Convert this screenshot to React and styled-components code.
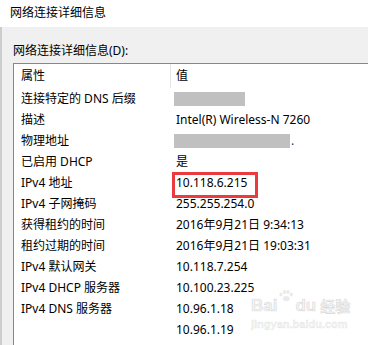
import React from "react";
import styled, { createGlobalStyle } from "styled-components";

const GlobalStyle = createGlobalStyle`
  html, body {
    margin: 0;
    padding: 0;
    background: #f0f0f0;
  }
  body {
    width: 368px;
    height: 345px;
    overflow: hidden;
    font-family: "Noto Sans", "Noto Sans CJK SC", sans-serif;
    font-size: 12px;
    color: #000;
  }
`;

const rows = [
  { name: "连接特定的 DNS 后缀", mask: 71 },
  { name: "描述", value: "Intel(R) Wireless-N 7260" },
  { name: "物理地址", mask: 116, dot: true },
  { name: "已启用 DHCP", value: "是" },
  { name: "IPv4 地址", value: "10.118.6.215", mark: true },
  { name: "IPv4 子网掩码", value: "255.255.254.0" },
  { name: "获得租约的时间", value: "2016年9月21日 9:34:13" },
  { name: "租约过期的时间", value: "2016年9月21日 19:03:31" },
  { name: "IPv4 默认网关", value: "10.118.7.254" },
  { name: "IPv4 DHCP 服务器", value: "10.100.23.225" },
  { name: "IPv4 DNS 服务器", value: "10.96.1.18" },
  { name: "", value: "10.96.1.19" },
];

function App() {
  return (
    <Window>
      <GlobalStyle />
      <TitleBar>网络连接详细信息</TitleBar>
      <Panel>
        <Label>网络连接详细信息(D):</Label>
        <ListBox>
          <HeaderRow>
            <NameCell>属性</NameCell>
            <Divider />
            <ValueCell>值</ValueCell>
          </HeaderRow>
          {rows.map((r, i) => (
            <Row key={i}>
              <NameCell>{r.name}</NameCell>
              <Spacer />
              <ValueCell>
                {r.mask ? <Mask $w={r.mask} /> : r.value}
                {r.dot && <Dot>.</Dot>}
                {r.mark && <RedBox />}
              </ValueCell>
            </Row>
          ))}
        </ListBox>
        <Watermark>
          <WmBrand>
            Bai
            <Paw viewBox="0 0 16 12">
              <ellipse cx="3" cy="5" rx="1.6" ry="2" />
              <ellipse cx="6.5" cy="2.5" rx="1.6" ry="2" />
              <ellipse cx="10" cy="2.5" rx="1.6" ry="2" />
              <ellipse cx="13.3" cy="5" rx="1.6" ry="2" />
              <ellipse cx="8.2" cy="9" rx="3.4" ry="2.6" />
            </Paw>
            du <WmCn>经验</WmCn>
          </WmBrand>
          <WmUrl>jingyan.baidu.com</WmUrl>
        </Watermark>
      </Panel>
    </Window>
  );
}

const Window = styled.div`
  width: 368px;
  height: 345px;
  display: flex;
  flex-direction: column;
  overflow: hidden;
`;

const TitleBar = styled.div`
  height: 27px;
  line-height: 26px;
  padding-left: 10px;
  background: #fff;
  flex-shrink: 0;
`;

const Panel = styled.div`
  position: relative;
  flex: 1;
  display: flex;
  flex-direction: column;
  padding: 16px 0 0 11px;
  background: #f0f0f0;
  border-left: 2px solid #cdcdcd;
`;

const Label = styled.div`
  line-height: 16px;
  height: 16px;
  margin-bottom: 4px;
`;

const ListBox = styled.div`
  flex: 1;
  background: #fff;
  border-top: 1px solid #828790;
  border-left: 1px solid #828790;
`;

const HeaderRow = styled.div`
  display: flex;
  height: 24px;
  line-height: 24px;
`;

const Row = styled.div`
  display: flex;
  height: 21px;
  line-height: 21px;
`;

const NameCell = styled.div`
  width: 149px;
  padding-left: 7px;
  white-space: nowrap;
`;

const Divider = styled.div`
  width: 1px;
  background: #e5e5e5;
`;

const Spacer = styled.div`
  width: 1px;
`;

const ValueCell = styled.div`
  position: relative;
  flex: 1;
  padding-left: 5px;
  white-space: nowrap;
  display: flex;
  align-items: center;
`;

const Mask = styled.span`
  display: inline-block;
  width: ${(p) => p.$w}px;
  height: 14px;
  margin-left: -2px;
  background: #c0c0c0;
`;

const Dot = styled.span`
  color: #1f3a6b;
  margin-left: 1px;
`;

const RedBox = styled.span`
  position: absolute;
  left: 1px;
  top: 0;
  width: 86px;
  height: 26px;
  box-sizing: border-box;
  border: 3px solid #ec3b3f;
`;

const Watermark = styled.div`
  position: absolute;
  left: 249px;
  top: 262px;
  display: flex;
  flex-direction: column;
  color: rgba(236, 236, 236, 0.6);
  -webkit-text-stroke: 0.6px rgba(190, 190, 190, 0.55);
  pointer-events: none;
`;

const WmBrand = styled.div`
  display: flex;
  align-items: flex-end;
  font-family: "Liberation Sans", sans-serif;
  font-weight: 700;
  font-size: 17px;
  line-height: 18px;
`;

const Paw = styled.svg`
  width: 16px;
  height: 13px;
  margin: 0 1px 13px;
  fill: rgba(225, 225, 225, 0.7);
`;

const WmCn = styled.span`
  margin-left: 4px;
  font-family: "Noto Sans CJK SC", sans-serif;
  font-size: 15px;
`;

const WmUrl = styled.div`
  margin-top: 3px;
  font-family: "Liberation Sans", sans-serif;
  font-weight: 700;
  font-size: 11px;
  line-height: 12px;
  -webkit-text-stroke: 0.3px rgba(200, 200, 200, 0.5);
`;

export default App;
